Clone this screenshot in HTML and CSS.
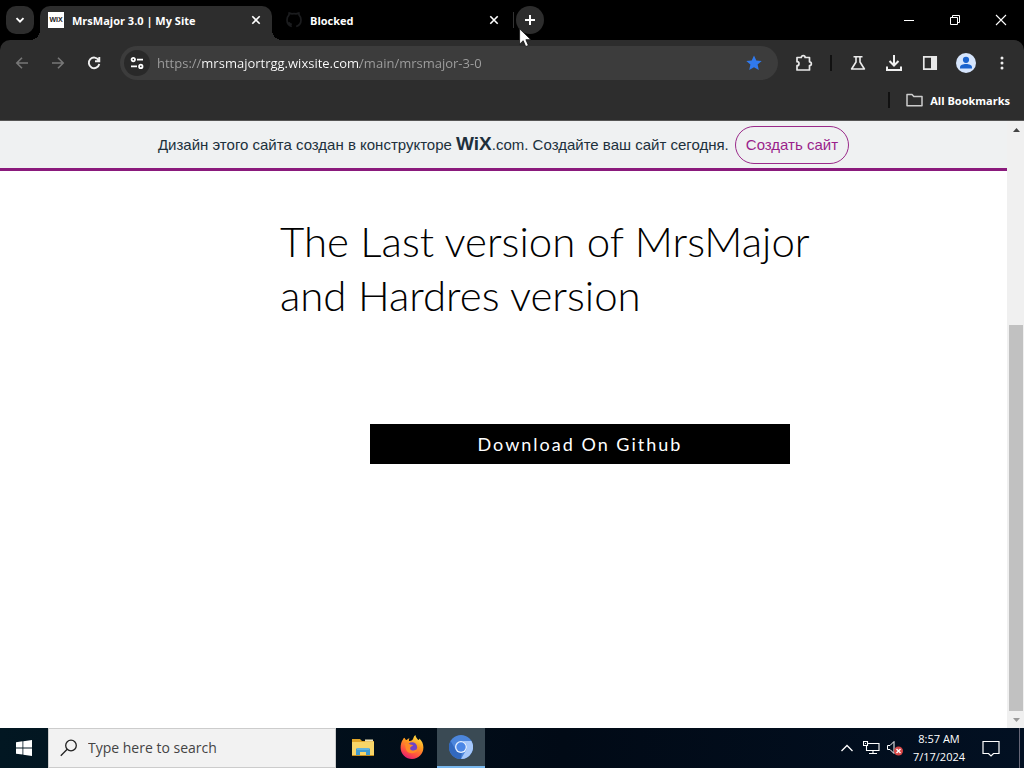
FILE: index.html
```html
<!DOCTYPE html>
<html lang="en">
<head>
<meta charset="utf-8">
<title>MrsMajor 3.0 | My Site</title>
<link rel="stylesheet" href="styles.css">
</head>
<body>
<div class="desktop">
  <header class="tab-strip">
    <button class="tab-search" aria-label="Search tabs"><svg width="10" height="10" viewBox="0 0 10 10" fill="none" stroke="#fff" stroke-width="1.9"><path d="M1.5 3.2 5 6.7l3.5-3.5"/></svg></button>
    <div class="tab tab-active">
      <span class="favicon" aria-hidden="true">WIX</span>
      <span class="tab-title">MrsMajor 3.0 | My Site</span>
      <button class="tab-close" aria-label="Close MrsMajor tab"><svg width="10" height="10" viewBox="0 0 10 10" stroke="#fff" stroke-width="1.6"><path d="m1.3 1.3 7.4 7.4m0-7.4L1.3 8.7"/></svg></button>
    </div>
    <div class="tab tab-second">
      <svg class="github" width="16" height="16" viewBox="0 0 16 16" fill="none" stroke="#1b1c1e" stroke-width="1.7"><path d="M5.800 14.500C2.800 13.500 1 11 1 8c0-1.900.7-3.600 1.900-4.800L3.200 1l2.600.9a8 8 0 0 1 4.400 0l2.600-.9.300 2.200C14.300 4.400 15 6.100 15 8c0 3-1.800 5.500-4.800 6.500M2.500 10.500c1.200.3 1.300 2 3.300 1.700"/></svg>
      <span class="tab-title">Blocked</span>
      <button class="tab-close" aria-label="Close Blocked tab"><svg width="10" height="10" viewBox="0 0 10 10" stroke="#fff" stroke-width="1.6"><path d="m1.300 1.300 7.400 7.400m0-7.400L1.300 8.700"/></svg></button>
    </div>
    <span class="tab-divider"></span>
    <button class="new-tab" aria-label="New tab"><svg width="12" height="12" viewBox="0 0 12 12" stroke="#fff" stroke-width="2"><path d="M6 1v10M1 6h10"/></svg>
      <svg class="cursor" width="13" height="20" viewBox="0 0 13 20"><path d="M.6.800v15.400l3.600-3.500 2.500 5.900 2.700-1.200-2.500-5.700h5z" fill="#fff" stroke="#111" stroke-width=".8"/></svg>
    </button>
    <div class="window-controls">
      <button aria-label="Minimize"><svg width="12" height="12" viewBox="0 0 12 12"><path d="M1 6.500h10" stroke="#fff"/></svg></button>
      <button aria-label="Restore"><svg width="12" height="12" viewBox="0 0 12 12" fill="none" stroke="#fff"><path d="M1.500 3.500h7v7h-7zM3.500 3.500v-2h7v7h-2"/></svg></button>
      <button aria-label="Close"><svg width="12" height="12" viewBox="0 0 12 12" stroke="#fff" stroke-width="1.100"><path d="m1 1 10 10m0-10L1 11"/></svg></button>
    </div>
  </header>

  <div class="browser-chrome">
    <div class="toolbar">
      <button class="tool" aria-label="Back"><svg width="14" height="14" viewBox="0 0 14 14" fill="none" stroke="#777" stroke-width="1.600"><path d="M13 7H2m5-5.200L1.800 7 7 12.200"/></svg></button>
      <button class="tool" aria-label="Forward"><svg width="14" height="14" viewBox="0 0 14 14" fill="none" stroke="#777" stroke-width="1.600"><path d="M1 7h11M7 1.800 12.200 7 7 12.200"/></svg></button>
      <button class="tool" aria-label="Reload"><svg width="14" height="14" viewBox="0 0 14 14" fill="none" stroke="#f0f0f0" stroke-width="1.900"><path d="M11.700 4.200A5.300 5.300 0 1 0 12.300 8M12.300 1v4.300H8"/></svg></button>
      <div class="omnibox">
        <button class="site-info" aria-label="View site information"><svg width="14" height="14" viewBox="0 0 14 14" fill="none" stroke="#fff" stroke-width="1.800"><circle cx="3.300" cy="3.600" r="1.700"/><path d="M7 3.600h6M1 10.400h6"/><circle cx="10.800" cy="10.400" r="1.700"/></svg></button>
        <input class="url" type="text" aria-label="Address" value="https://mrsmajortrgg.wixsite.com/main/mrsmajor-3-0">
        <button class="star" aria-label="Edit bookmark"><svg width="16" height="16" viewBox="0 0 16 16" fill="#3079ed"><path d="m8 .400 2.300 5 5.400.5-4.100 3.700 1.200 5.500L8 12.300l-4.800 2.800 1.200-5.500L.3 5.900l5.400-.5z"/></svg></button>
      </div>
      <button class="tool tool-extensions" aria-label="Extensions"><svg width="18" height="18" viewBox="0 0 18 18" fill="none" stroke="#e8e8e8" stroke-width="1.700" stroke-linejoin="round"><path d="M2 3.500h4.300a1.900 1.900 0 0 1 3.800 0h4.400v4.300a1.800 1.800 0 0 1 0 3.700v4.500H2v-4.300a2 2 0 0 0 0-4z"/></svg></button>
      <span class="divider"></span>
      <button class="tool" aria-label="Experiments"><svg width="16" height="16" viewBox="0 0 16 16" fill="none" stroke="#ececec" stroke-width="1.600" stroke-linejoin="round"><path d="M3.500 1.800h9M6 2v5l-4.400 7h12.800L10 7V2"/></svg></button>
      <button class="tool" aria-label="Downloads"><svg width="18" height="18" viewBox="0 0 18 18" fill="none" stroke="#f0f0f0" stroke-width="2"><path d="M9 1v10M4.500 7 9 11.500 13.500 7M2 12.500V16h14v-3.500"/></svg></button>
      <button class="tool" aria-label="Side panel"><svg width="16" height="16" viewBox="0 0 16 16"><path d="M1.800 1.800h12.400v12.400H1.800z" fill="none" stroke="#e8e8e8" stroke-width="1.700"/><path d="M9 1h6v14H9z" fill="#e8e8e8"/></svg></button>
      <button class="tool" aria-label="Profile"><svg width="20" height="20" viewBox="0 0 20 20"><circle cx="10" cy="10" r="10" fill="#d6e5fc"/><circle cx="10" cy="6.800" r="3.100" fill="#1a63ce"/><path d="M4 15.500v-1.300c0-2 3-3.200 6-3.200s6 1.200 6 3.200v1.300z" fill="#1a63ce"/></svg></button>
      <button class="tool" aria-label="Menu"><svg width="4" height="16" viewBox="0 0 4 16" fill="#eee"><circle cx="2" cy="3" r="1.500"/><circle cx="2" cy="8" r="1.500"/><circle cx="2" cy="13" r="1.500"/></svg></button>
    </div>
    <div class="bookmarks">
      <span class="divider"></span>
      <button class="all-bookmarks"><svg width="17" height="14" viewBox="0 0 17 14" fill="none" stroke="#ccc" stroke-width="1.500" stroke-linejoin="round"><path d="M1 1.500h5l1.800 2H16v9.200H1z"/></svg>All Bookmarks</button>
    </div>
  </div>

  <div class="viewport">
    <main class="site" lang="ru">
      <div class="wix-banner">
        <p class="banner-text">Дизайн этого сайта создан в конструкторе <span class="wix-logo">WiX</span>.com. Создайте ваш сайт сегодня.</p>
        <a class="create-site" href="#create">Создать сайт</a>
      </div>
      <section class="content" lang="en">
        <h1>The Last version of MrsMajor<br>and Hardres version</h1>
        <a class="download" href="#download">Download On Github</a>
      </section>
    </main>
    <div class="scrollbar" aria-hidden="true">
      <span class="arrow"><svg width="7" height="4" viewBox="0 0 7 4"><path d="M0 4 3.500 0 7 4z" fill="#444"/></svg></span>
      <span class="track-space"></span>
      <span class="thumb"></span>
      <span class="arrow"><svg width="7" height="4" viewBox="0 0 7 4"><path d="M0 0h7L3.500 4z" fill="#999"/></svg></span>
    </div>
  </div>

  <footer class="taskbar">
    <button class="start" aria-label="Start"><svg width="16" height="16" viewBox="0 0 16 16" fill="#fff"><path d="M0 2.200 6.500 1.300v6.200H0zM7.300 1.200 16 0v7.500H7.300zM0 8.400h6.500v6.200L0 13.700zM7.300 8.400H16V16l-8.700-1.200z"/></svg></button>
    <label class="search">
      <svg width="18" height="18" viewBox="0 0 18 18" fill="none" stroke="#222" stroke-width="1.300"><circle cx="11" cy="6.500" r="5.300"/><path d="M7.200 10.300.8 16.700"/></svg>
      <input type="text" placeholder="Type here to search" aria-label="Type here to search">
    </label>
    <nav class="apps">
      <button class="app" aria-label="File Explorer"><svg width="22" height="20" viewBox="0 0 22 20"><path d="M0 2h8l2 2h12v15H0z" fill="#e0a528"/><path d="M0 5h22v13H0z" fill="#f8d568"/><path d="M13 2.500h8v2h-8z" fill="#eee2b5"/><path d="M4 18v-5.500q0-1.500 1.500-1.500h11q1.500 0 1.500 1.500V18h-4v-3H8v3z" fill="#3f9bd0"/><path d="M5 12h12" stroke="#85c9ea"/><path d="M0 18.500h22" stroke="#c18a1b"/></svg></button>
      <button class="app" aria-label="Firefox"><svg width="24" height="24" viewBox="0 0 24 24">
        <defs><linearGradient id="fire" x1=".8" y1="0" x2=".3" y2="1"><stop offset="0" stop-color="#ffe84a"/><stop offset=".4" stop-color="#ff9a1f"/><stop offset=".75" stop-color="#ff4f42"/><stop offset="1" stop-color="#e31b74"/></linearGradient></defs>
        <path d="M3 4.500C3.300 3.500 4 3 4.500 2.800 5 4 5.500 4.700 6.700 5c.8-.9 1.800-1.500 2.800-1.700-.5.900-.7 1.800-.4 2.700C11 6.300 13 5 13.400 3c.3-1.300 1-2.300 2-3 .3 2.300 1.600 3.600 3 5 .7-.1 1-.8 1-1.500 2.600 2.400 4 5.500 4 9A11.400 11.400 0 0 1 .6 12.700C.6 9 1.500 6.500 3 4.500z" fill="url(#fire)"/>
        <circle cx="12.200" cy="12.200" r="4.900" fill="#7244c7"/><path d="M4.500 9c2-1 4-.7 5.500.3 1 .7 2.300.6 3.200.8-.4 1.400-2.500 1.300-3 2.700-.4 1.500.8 2.700 2.300 2.700 2.300 0 3.600-1.400 5.300-1-1.300 4.300-9.300 5.200-11.600.5C5 12.500 6 10.500 4.500 9z" fill="#ff8a26"/></svg></button>
      <button class="app app-active" aria-label="Chromium"><svg width="24" height="24" viewBox="0 0 24 24"><circle cx="12" cy="12" r="12" fill="#4c86dc"/><path d="M12 6h10.400A12 12 0 0 1 12 24l5.200-9A6 6 0 0 0 12 6z" fill="#a6c8fb"/><path d="M12 24A12 12 0 0 1 1.600 6l5.200 9a6 6 0 0 0 6 3z" fill="#3269bf"/><circle cx="12" cy="12" r="6" fill="#e6f0ff"/><circle cx="12" cy="12" r="4.700" fill="#4b87e6"/></svg></button>
    </nav>
    <div class="tray">
      <button class="tray-icon" aria-label="Show hidden icons"><svg width="12" height="8" viewBox="0 0 12 8" fill="none" stroke="#fff" stroke-width="1.300"><path d="m.5 7 5.500-5.500L11.500 7"/></svg></button>
      <button class="tray-icon" aria-label="Network"><svg width="17" height="14" viewBox="0 0 17 14" fill="none" stroke="#fff" stroke-width="1.100"><path d="M5 2.500h11v7H3.500V5M6 12.500h8M10 9.500v3M.5.500h4v4h-4zM2 2.500h1"/></svg></button>
      <button class="tray-icon" aria-label="Muted"><svg width="18" height="16" viewBox="0 0 18 16"><path d="M1.500 5.500H4l4-4v12l-4-4H1.500z" fill="none" stroke="#fff"/><circle cx="12.500" cy="11" r="4.500" fill="#d84747"/><path d="m10.500 9 4 4m0-4-4 4" stroke="#fff" stroke-width="1.400"/></svg></button>
      <button class="clock"><span>8:57 AM</span><span>7/17/2024</span></button>
      <button class="notifications" aria-label="Notifications"><svg width="18" height="17" viewBox="0 0 18 17" fill="none" stroke="#fff" stroke-width="1.200"><path d="M1 1.500h16v12h-5.500L9 16l-2.500-2.500H1z"/></svg></button>
      <span class="show-desktop"></span>
    </div>
  </footer>
</div>
</body>
</html>
```
FILE: styles.css
```css
* { box-sizing: border-box; }

body {
  margin: 0;
  font-family: "Open Sans", "Noto Sans", sans-serif;
  font-size: 11px;
}

button {
  display: flex;
  align-items: center;
  justify-content: center;
  flex: none;
  padding: 0;
  border: 0;
  background: none;
  color: inherit;
  font: inherit;
}

svg { display: block; flex: none; }

.desktop {
  display: flex;
  flex-direction: column;
  height: 100vh;
  overflow: hidden;
  background: #000;
}

/* Tab strip */
.tab-strip {
  display: flex;
  align-items: center;
  height: 40px;
  flex: none;
  padding-left: 6px;
  color: #fff;
}

.tab-search {
  width: 28px;
  height: 28px;
  border-radius: 10px;
  background: #2d2d2d;
}

.tab {
  position: relative;
  display: flex;
  align-items: center;
  gap: 8px;
  height: 34px;
  align-self: flex-end;
  padding: 0 8px 6px;
  font-weight: 700;
}

.tab-active {
  width: 232px;
  margin-left: 6px;
  border-radius: 10px 10px 0 0;
  background: #2d2d2d;
}

.tab-active::before,
.tab-active::after {
  content: "";
  position: absolute;
  bottom: 0;
  width: 10px;
  height: 10px;
}

.tab-active::before {
  right: 100%;
  background: radial-gradient(circle at 0 0, transparent 10px, #2d2d2d 10px);
}

.tab-active::after {
  left: 100%;
  background: radial-gradient(circle at 100% 0, transparent 10px, #2d2d2d 10px);
}

.tab-second { width: 238px; padding-left: 14px; }

.tab-title { flex: 1; white-space: nowrap; }

.favicon {
  width: 16px;
  height: 16px;
  background: #fff;
  color: #222;
  font: bold 7px/16px "Liberation Sans", sans-serif;
  text-align: center;
}

.tab-close { width: 16px; height: 16px; }

.tab-divider { width: 1px; height: 16px; margin: 0 2px 0 3px; background: #333; }

.new-tab {
  position: relative;
  width: 28px;
  height: 28px;
  border-radius: 50%;
  background: #2d2d2d;
}

.cursor { position: absolute; left: 3px; top: 22px; }

.window-controls { display: flex; margin-left: auto; }
.window-controls button { width: 46px; height: 40px; }

/* Toolbar */
.browser-chrome {
  flex: none;
  border-bottom: 1px solid #555;
  border-radius: 10px 10px 0 0;
  background: #2d2d2d;
  color: #fff;
}

.toolbar {
  display: flex;
  align-items: center;
  padding: 6px 4px 0;
}

.tool { width: 36px; height: 34px; }
.tool-extensions { margin-left: 8px; }
.divider { width: 2px; height: 16px; background: #111; }
.toolbar .divider { margin: 0 8px; }

.omnibox {
  display: flex;
  align-items: center;
  flex: 1;
  min-width: 0;
  height: 34px;
  margin-left: 8px;
  padding: 0 12px 0 4px;
  border-radius: 17px;
  background: #3c3c3c;
}

.site-info {
  width: 26px;
  height: 26px;
  border-radius: 50%;
  background: #292929;
}

.url {
  flex: 1;
  min-width: 0;
  margin-left: 7px;
  padding: 0;
  border: 0;
  outline: 0;
  background: linear-gradient(90deg, #a0a0a0 45px, #fff 45px 203px, #a0a0a0 203px);
  background-clip: text;
  color: transparent;
  font: 13px/20px "Open Sans", sans-serif;
}

.star { width: 24px; height: 24px; }

.bookmarks {
  display: flex;
  align-items: center;
  justify-content: flex-end;
  gap: 16px;
  height: 40px;
  padding-right: 14px;
}

.all-bookmarks { gap: 7px; font-weight: 700; }

/* Web page */
.viewport {
  display: flex;
  flex: 1;
  min-height: 0;
  background: #fff;
}

.site { flex: 1; min-width: 0; overflow: hidden; }

.wix-banner {
  display: flex;
  align-items: center;
  justify-content: center;
  gap: 6px;
  height: 50px;
  border-bottom: 3px solid #8a1a7c;
  background: #eff1f2;
  color: #20303c;
  font: 15px/20px "Liberation Sans", sans-serif;
}

.banner-text { margin: 0; }

.wix-logo { font-size: 19px; font-weight: bold; line-height: 1; }

.create-site {
  padding: 8px 10px;
  border: 1px solid #9a2a8a;
  border-radius: 19px;
  color: #9a1f8b;
  text-decoration: none;
}

.content {
  display: flex;
  flex-direction: column;
  width: 600px;
  max-width: 72%;
  margin-left: 27.8%;
  padding-top: 43px;
}

h1 {
  margin: 0;
  color: #000;
  font: 300 42px/54px Lato, sans-serif;
}

.download {
  width: 70%;
  align-self: center;
  margin-top: 102px;
  background: #000;
  color: #fff;
  font: 18px/40px Lato, sans-serif;
  letter-spacing: 2px;
  text-align: center;
  text-decoration: none;
}

.scrollbar {
  display: flex;
  flex-direction: column;
  width: 17px;
  flex: none;
  padding: 0 1px 0 2px;
  background: #f0f0f0;
}

.arrow { display: flex; align-items: center; justify-content: center; height: 17px; }
.track-space { flex: 187; }
.thumb { flex: 386; background: #c1c1c1; }

/* Taskbar */
.taskbar {
  display: flex;
  height: 40px;
  flex: none;
  background: linear-gradient(90deg, #021722, #010a16 55%, #021022);
  color: #fff;
}

.start { width: 48px; }

.search {
  display: flex;
  align-items: center;
  gap: 10px;
  width: 288px;
  padding: 0 11px;
  border: 1px solid #ccc;
  background: #f2f2f2;
}

.search input {
  flex: 1;
  min-width: 0;
  padding: 0;
  border: 0;
  outline: 0;
  background: none;
  font: 14px/20px "Open Sans", sans-serif;
}

.search input::placeholder { color: #444; opacity: 1; }

.apps { display: flex; gap: 1px; margin-left: 3px; }
.app { width: 48px; border-bottom: 2px solid transparent; }
.app-active { border-bottom-color: #79b8ee; background: #3a4a54; }

.tray { display: flex; margin-left: auto; }
.tray-icon { width: 24px; }
.clock { flex-direction: column; width: 64px; line-height: 18px; }
.notifications { width: 40px; }
.show-desktop { width: 5px; margin-left: 8px; border-left: 1px solid #667; }
```
